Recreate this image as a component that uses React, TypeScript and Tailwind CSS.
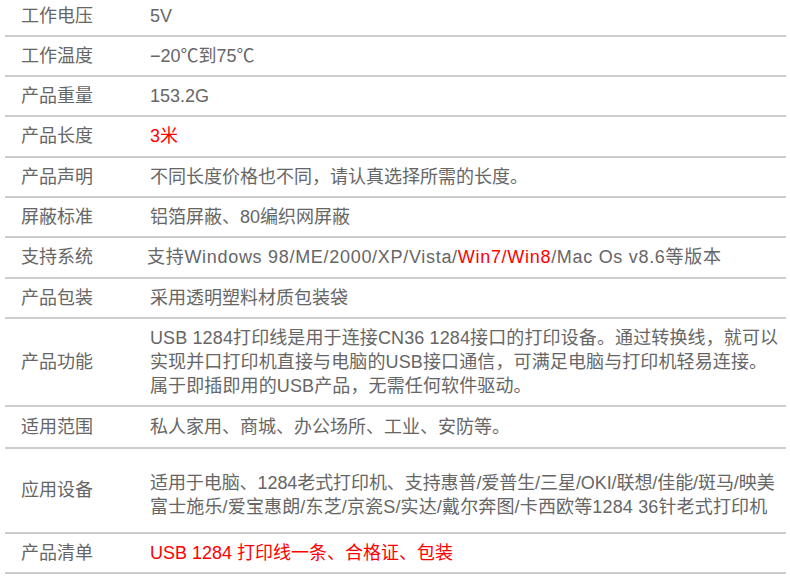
import React from "react";

type Row = {
  label: string;
  h: string;
  value: React.ReactNode;
};

const red = "text-[#ff0000]";

const rows: Row[] = [
  { label: "工作电压", h: "h-[37px] pb-[3px]", value: "5V" },
  { label: "工作温度", h: "h-[40px]", value: "−20℃到75℃" },
  { label: "产品重量", h: "h-[40px]", value: "153.2G" },
  { label: "产品长度", h: "h-[41px]", value: <span className={red}>3米</span> },
  { label: "产品声明", h: "h-[40px]", value: "不同长度价格也不同，请认真选择所需的长度。" },
  { label: "屏蔽标准", h: "h-[40px]", value: "铝箔屏蔽、80编织网屏蔽" },
  {
    label: "支持系统",
    h: "h-[41px]",
    value: (
      <span className="-ml-[3px] tracking-[0.7px]">
        支持Windows 98/ME/2000/XP/Vista/<span className={red}>Win7/Win8</span>/Mac Os v8.6等版本
      </span>
    ),
  },
  { label: "产品包装", h: "h-[40px]", value: "采用透明塑料材质包装袋" },
  {
    label: "产品功能",
    h: "h-[88px]",
    value: (
      <div className="leading-[24px] tracking-[0.12px]">
        <div>USB 1284打印线是用于连接CN36 1284接口的打印设备。通过转换线，就可以</div>
        <div>实现并口打印机直接与电脑的USB接口通信，可满足电脑与打印机轻易连接。</div>
        <div>属于即插即用的USB产品，无需任何软件驱动。</div>
      </div>
    ),
  },
  { label: "适用范围", h: "h-[42px]", value: "私人家用、商城、办公场所、工业、安防等。" },
  {
    label: "应用设备",
    h: "h-[85px]",
    value: (
      <div className="leading-[24px] pt-[9px]">
        <div className="tracking-[-0.08px]">适用于电脑、1284老式打印机、支持惠普/爱普生/三星/OKI/联想/佳能/斑马/映美</div>
        <div className="tracking-[0.15px]">富士施乐/爱宝惠朗/东芝/京瓷S/实达/戴尔奔图/卡西欧等1284 36针老式打印机</div>
      </div>
    ),
  },
  {
    label: "产品清单",
    h: "h-[40px]",
    value: <span className={red}>USB 1284 打印线一条、合格证、包装</span>,
  },
];

export default function App() {
  return (
    <div className="w-[790px] h-[582px] bg-white overflow-hidden font-['Liberation_Sans','Noto_Sans_CJK_SC',sans-serif] text-[18px] text-[#666666]">
      <div className="ml-[5px] w-[781px] flex flex-col">
        {rows.map((r) => (
          <div
            key={r.label}
            className={`flex items-center border-b-2 border-[#cdcdcd] whitespace-nowrap ${r.h}`}
          >
            <div className="w-[145px] shrink-0 pl-[16px]">{r.label}</div>
            <div className="flex-1">{r.value}</div>
          </div>
        ))}
      </div>
    </div>
  );
}
